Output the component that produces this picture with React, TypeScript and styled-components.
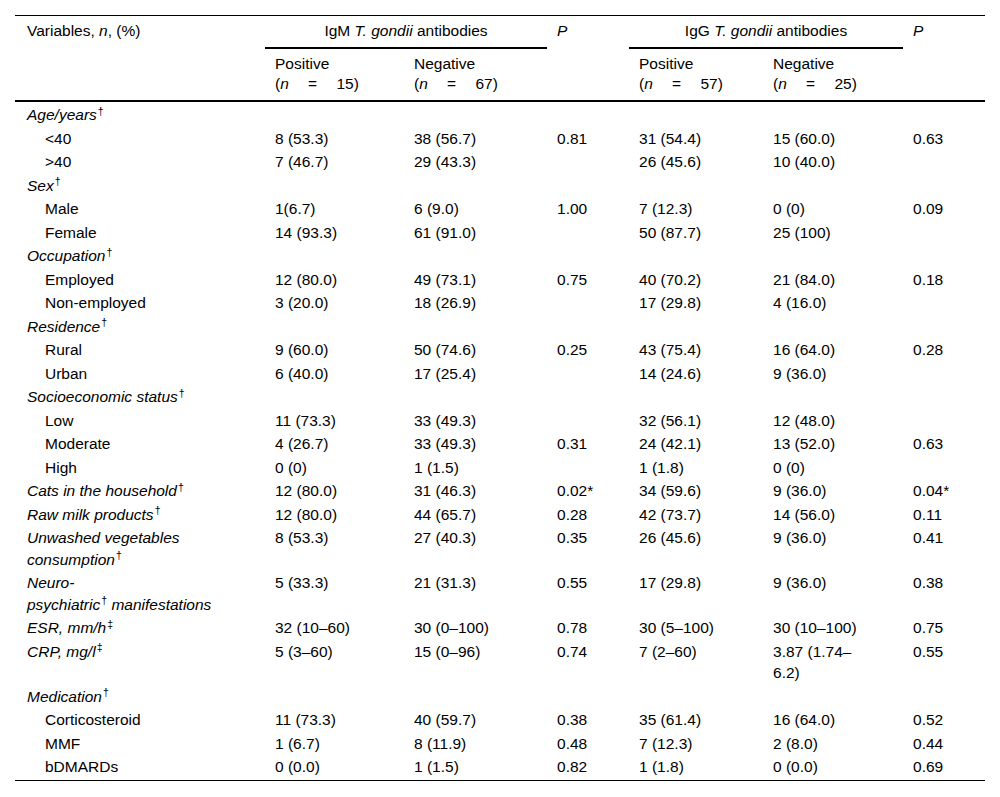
import React from "react";
import styled, { createGlobalStyle, css } from "styled-components";

const GlobalStyle = createGlobalStyle`
  html, body { margin: 0; padding: 0; background: #fff; }
  body { font-family: "Liberation Sans", Arial, Helvetica, sans-serif; color: #000; }
`;

const Page = styled.div`
  padding: 15px 15px 0 15px;
`;

const Table = styled.table`
  width: 970px;
  table-layout: fixed;
  border-collapse: separate;
  border-spacing: 0;
  border-top: 1px solid #000;
  border-bottom: 1px solid #000;
  font-size: 15.5px;
`;

const HeadCell = styled.th<{ $center?: boolean; $rule?: boolean; $thick?: boolean; $first?: boolean }>`
  font-weight: normal;
  text-align: ${(p) => (p.$center ? "center" : "left")};
  vertical-align: top;
  padding: 5px 10px 6px ${(p) => (p.$first ? "12px" : "10px")};
  line-height: 20px;
  white-space: nowrap;
  ${(p) => p.$rule && css`border-bottom: 2px solid #000;`}
  ${(p) => p.$thick && css`border-bottom: 2px solid #000;`}
`;

const Count = styled.span`
  word-spacing: 15px;
`;

const Row = styled.tr``;

const LabelCell = styled.td<{ $sub?: boolean; $top?: boolean; $bottom?: boolean }>`
  vertical-align: top;
  line-height: 21.5px;
  padding: ${(p) => (p.$top ? "2px" : "1px")} 10px ${(p) => (p.$bottom ? "2.5px" : "1px")}
    ${(p) => (p.$sub ? "30px" : "12px")};
  font-style: ${(p) => (p.$sub ? "normal" : "italic")};
`;

const DataCell = styled.td<{ $top?: boolean; $bottom?: boolean }>`
  vertical-align: top;
  line-height: 21.5px;
  padding: ${(p) => (p.$top ? "2px" : "1px")} 40px ${(p) => (p.$bottom ? "2.5px" : "1px")} 10px;
`;

const Sup = styled.sup`
  font-size: 0.68em;
  font-style: normal;
  line-height: 0;
  vertical-align: 0.5em;
  margin-left: 1px;
`;

const Em = styled.i`
  font-style: italic;
`;

type RowData = {
  label: React.ReactNode;
  kind: "cat" | "sub" | "item";
  v?: string[];
};

const dag = <Sup>†</Sup>;
const ddag = <Sup>‡</Sup>;

const rows: RowData[] = [
  { label: <>Age/years{dag}</>, kind: "cat" },
  { label: "<40", kind: "sub", v: ["8 (53.3)", "38 (56.7)", "0.81", "31 (54.4)", "15 (60.0)", "0.63"] },
  { label: ">40", kind: "sub", v: ["7 (46.7)", "29 (43.3)", "", "26 (45.6)", "10 (40.0)", ""] },
  { label: <>Sex{dag}</>, kind: "cat" },
  { label: "Male", kind: "sub", v: ["1(6.7)", "6 (9.0)", "1.00", "7 (12.3)", "0 (0)", "0.09"] },
  { label: "Female", kind: "sub", v: ["14 (93.3)", "61 (91.0)", "", "50 (87.7)", "25 (100)", ""] },
  { label: <>Occupation{dag}</>, kind: "cat" },
  { label: "Employed", kind: "sub", v: ["12 (80.0)", "49 (73.1)", "0.75", "40 (70.2)", "21 (84.0)", "0.18"] },
  { label: "Non-employed", kind: "sub", v: ["3 (20.0)", "18 (26.9)", "", "17 (29.8)", "4 (16.0)", ""] },
  { label: <>Residence{dag}</>, kind: "cat" },
  { label: "Rural", kind: "sub", v: ["9 (60.0)", "50 (74.6)", "0.25", "43 (75.4)", "16 (64.0)", "0.28"] },
  { label: "Urban", kind: "sub", v: ["6 (40.0)", "17 (25.4)", "", "14 (24.6)", "9 (36.0)", ""] },
  { label: <>Socioeconomic status{dag}</>, kind: "cat" },
  { label: "Low", kind: "sub", v: ["11 (73.3)", "33 (49.3)", "", "32 (56.1)", "12 (48.0)", ""] },
  { label: "Moderate", kind: "sub", v: ["4 (26.7)", "33 (49.3)", "0.31", "24 (42.1)", "13 (52.0)", "0.63"] },
  { label: "High", kind: "sub", v: ["0 (0)", "1 (1.5)", "", "1 (1.8)", "0 (0)", ""] },
  { label: <>Cats in the household{dag}</>, kind: "item", v: ["12 (80.0)", "31 (46.3)", "0.02*", "34 (59.6)", "9 (36.0)", "0.04*"] },
  { label: <>Raw milk products{dag}</>, kind: "item", v: ["12 (80.0)", "44 (65.7)", "0.28", "42 (73.7)", "14 (56.0)", "0.11"] },
  { label: <>Unwashed vegetables consumption{dag}</>, kind: "item", v: ["8 (53.3)", "27 (40.3)", "0.35", "26 (45.6)", "9 (36.0)", "0.41"] },
  { label: <>Neuro-psychiatric{dag}{"\u00a0"}manifestations</>, kind: "item", v: ["5 (33.3)", "21 (31.3)", "0.55", "17 (29.8)", "9 (36.0)", "0.38"] },
  { label: <>ESR, mm/h{ddag}</>, kind: "item", v: ["32 (10–60)", "30 (0–100)", "0.78", "30 (5–100)", "30 (10–100)", "0.75"] },
  { label: <>CRP, mg/l{ddag}</>, kind: "item", v: ["5 (3–60)", "15 (0–96)", "0.74", "7 (2–60)", "3.87 (1.74–6.2)", "0.55"] },
  { label: <>Medication{dag}</>, kind: "cat" },
  { label: "Corticosteroid", kind: "sub", v: ["11 (73.3)", "40 (59.7)", "0.38", "35 (61.4)", "16 (64.0)", "0.52"] },
  { label: "MMF", kind: "sub", v: ["1 (6.7)", "8 (11.9)", "0.48", "7 (12.3)", "2 (8.0)", "0.44"] },
  { label: "bDMARDs", kind: "sub", v: ["0 (0.0)", "1 (1.5)", "0.82", "1 (1.8)", "0 (0.0)", "0.69"] },
];

const widths = [250, 139, 143, 82, 134, 140, 82];

export default function App() {
  return (
    <>
      <GlobalStyle />
      <Page>
        <Table>
          <colgroup>
            {widths.map((w, i) => (
              <col key={i} style={{ width: w }} />
            ))}
          </colgroup>
          <thead>
            <tr>
              <HeadCell rowSpan={2} $thick $first>
                Variables, <Em>n</Em>, (%)
              </HeadCell>
              <HeadCell colSpan={2} $center $rule>
                IgM <Em>T. gondii</Em> antibodies
              </HeadCell>
              <HeadCell rowSpan={2} $thick>
                <Em>P</Em>
              </HeadCell>
              <HeadCell colSpan={2} $center $rule>
                IgG <Em>T. gondii</Em> antibodies
              </HeadCell>
              <HeadCell rowSpan={2} $thick>
                <Em>P</Em>
              </HeadCell>
            </tr>
            <tr>
              {[
                ["Positive", "15"],
                ["Negative", "67"],
                ["Positive", "57"],
                ["Negative", "25"],
              ].map(([t, n], i) => (
                <HeadCell key={i} $thick>
                  {t}
                  <br />
                  <Count>
                    (<Em>n</Em> = {n})
                  </Count>
                </HeadCell>
              ))}
            </tr>
          </thead>
          <tbody>
            {rows.map((r, i) => {
              const top = i === 0;
              const bottom = i === rows.length - 1;
              return (
                <Row key={i}>
                  <LabelCell $sub={r.kind === "sub"} $top={top} $bottom={bottom}>
                    {r.label}
                  </LabelCell>
                  {(r.v ?? ["", "", "", "", "", ""]).map((v, j) => (
                    <DataCell key={j} $top={top} $bottom={bottom}>
                      {v}
                    </DataCell>
                  ))}
                </Row>
              );
            })}
          </tbody>
        </Table>
      </Page>
    </>
  );
}
